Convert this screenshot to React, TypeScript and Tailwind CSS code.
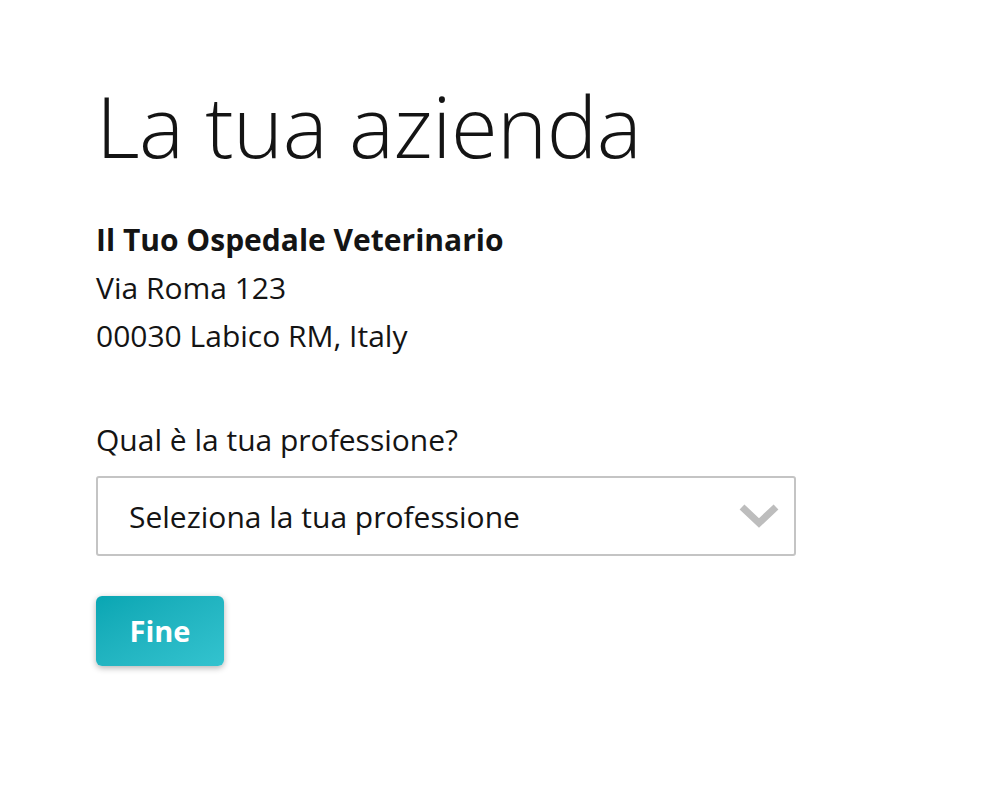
import * as React from "react";

function Chevron() {
  return (
    <svg width="42" height="26" viewBox="0 0 42 26" className="shrink-0">
      <path d="M4 4 L21 20 L38 4" fill="none" stroke="#bdbdbd" strokeWidth="7" strokeLinejoin="miter" />
    </svg>
  );
}

export default function App() {
  return (
    <div
      className="min-h-[800px] w-[1000px] bg-white text-[#141414]"
      style={{ fontFamily: '"Open Sans", "Noto Sans", sans-serif' }}
    >
      <div className="px-[96px] pt-[70px]">
        <h1 className="text-[85px] font-light leading-[110px] tracking-[-0.5px]">La tua azienda</h1>

        <div className="mt-[36px] text-[30px] leading-[48px]">
          <div className="font-bold">Il Tuo Ospedale Veterinario</div>
          <div>Via Roma 123</div>
          <div>00030 Labico RM, Italy</div>
        </div>

        <div className="mt-[56px] text-[30px] leading-[48px]">Qual è la tua professione?</div>

        <div className="mt-[12px] flex h-[80px] w-[700px] items-center justify-between rounded-[3px] border-2 border-[#c4c4c4] pl-[31px] pr-[14px] text-[30px]">
          <span>Seleziona la tua professione</span>
          <Chevron />
        </div>

        <button className="mt-[40px] flex h-[70px] w-[128px] items-center justify-center rounded-[6px] bg-gradient-to-br from-[#07a6b3] to-[#33c3cf] text-[29px] font-bold text-white shadow-[0_2px_6px_rgba(0,0,0,0.3)]">
          Fine
        </button>
      </div>
    </div>
  );
}
